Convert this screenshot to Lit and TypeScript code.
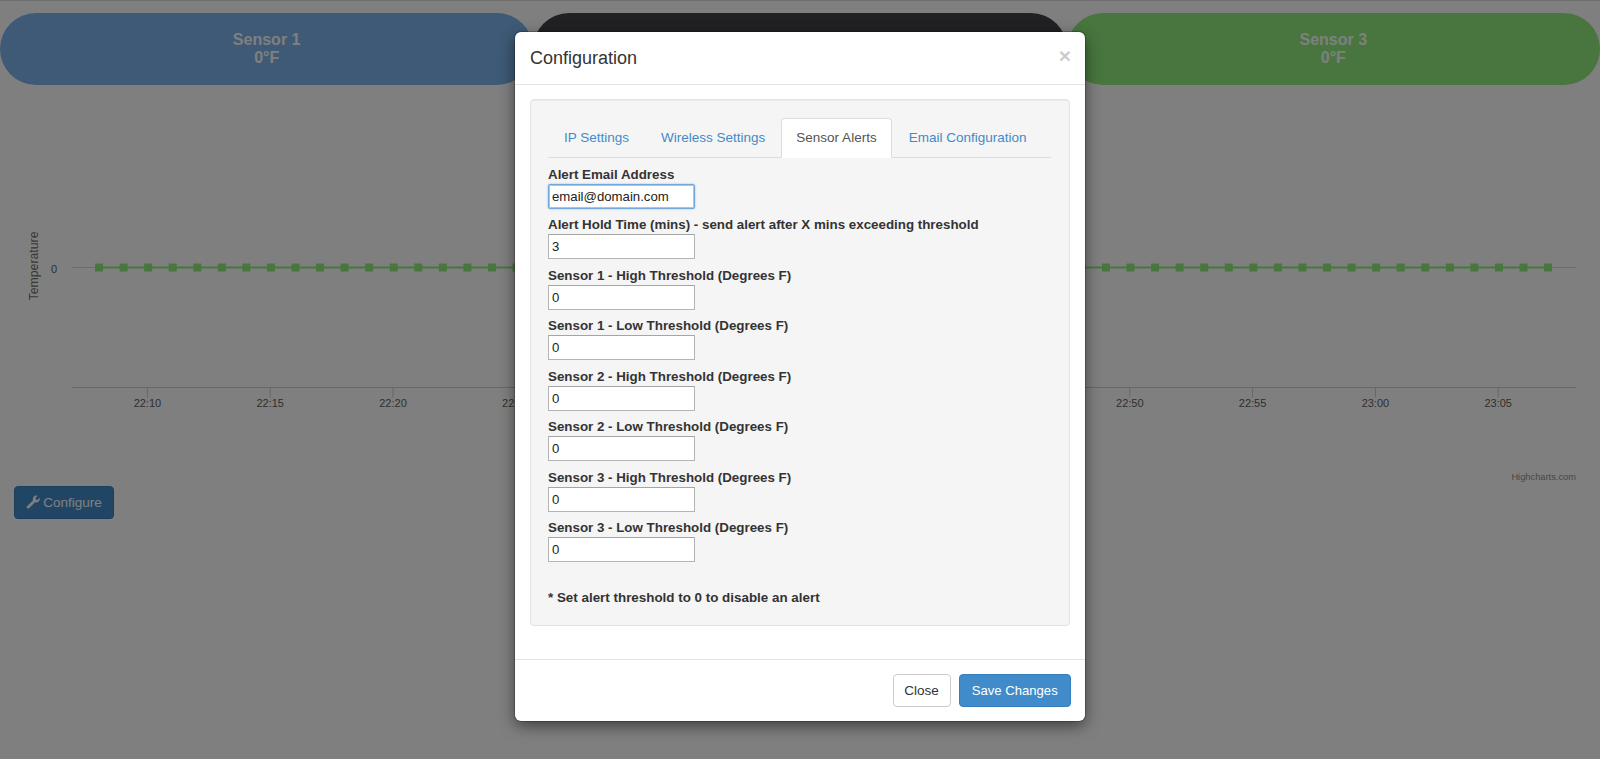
import { LitElement, html, css, svg } from "lit";
import { customElement } from "lit/decorators.js";

const FIELDS = [
  ["Alert Email Address", "email@domain.com", true],
  ["Alert Hold Time (mins) - send alert after X mins exceeding threshold", "3", false],
  ["Sensor 1 - High Threshold (Degrees F)", "0", false],
  ["Sensor 1 - Low Threshold (Degrees F)", "0", false],
  ["Sensor 2 - High Threshold (Degrees F)", "0", false],
  ["Sensor 2 - Low Threshold (Degrees F)", "0", false],
  ["Sensor 3 - High Threshold (Degrees F)", "0", false],
  ["Sensor 3 - Low Threshold (Degrees F)", "0", false],
] as const;

const TICKS = ["22:10","22:15","22:20","22:25","22:30","22:35","22:40","22:45","22:50","22:55","23:00","23:05"];

@customElement("app-root")
export class AppRoot extends LitElement {
  static styles = css`
    :host { display: block; height: 759px; position: relative; overflow: hidden; background: #fff;
      font-family: "Liberation Sans", Arial, sans-serif; font-size: 14px; color: #333; }
    .page { display: flex; flex-direction: column; padding-top: 13px; }
    .pills { display: grid; grid-template-columns: repeat(3, 1fr); }
    .pill { height: 72px; border-radius: 36px; color: #fff; font-weight: bold; font-size: 16px; line-height: 17.6px;
      display: flex; flex-direction: column; align-items: center; justify-content: center; box-sizing: border-box; }
    .s1 { background: #7cb5ec; } .s2 { background: #434348; } .s3 { background: #90ed7d; }
    .chart { display: block; width: 1600px; height: 400.5px; }
    .chart text { font-family: "Liberation Sans", Arial, sans-serif; }
    .cfg { align-self: flex-start; margin-left: 14px; height: 33px; width: 100px; box-sizing: border-box; border: 1px solid #357ebd;
      border-radius: 4px; background: #428bca; color: #fff; font: 13.5px "Liberation Sans", Arial, sans-serif;
      display: flex; align-items: center; justify-content: center; gap: 3px; padding: 0; }
    .backdrop { position: absolute; inset: 0; background: rgba(0,0,0,.5); border-top: 1px solid #6e6e6e; box-sizing: border-box; }
    .modal { position: absolute; left: 515px; top: 32px; width: 570px; height: 689px; box-sizing: border-box; background: #fff;
      border-radius: 6px; box-shadow: 0 0 0 1px rgba(0,0,0,.2), 0 5px 15px rgba(0,0,0,.5); display: flex; flex-direction: column; }
    .head { display: flex; justify-content: space-between; align-items: flex-start; padding: 13px 15px; height: 53px; box-sizing: border-box; border-bottom: 1px solid #e5e5e5; }
    .head h4 { margin: 0; font-size: 18px; font-weight: 400; line-height: 26px; color: #333; }
    .x { font-size: 21px; font-weight: bold; line-height: 20px; color: #000; opacity: .2; margin: 1px -1px 0 0; }
    .body { flex: 1; padding: 14px 15px 0; }
    .well { height: 527px; box-sizing: border-box; background: #f5f5f5; border: 1px solid #e3e3e3; border-radius: 4px; padding: 18px 18px 0 17px; box-shadow: inset 0 1px 1px rgba(0,0,0,.05); }
    .tabs { display: flex; gap: 2px; border-bottom: 1px solid #ddd; height: 40px; box-sizing: border-box; margin-bottom: 6.5px; }
    .tab { padding: 0 14px; height: 40px; box-sizing: border-box; line-height: 38px; border: 1px solid transparent; border-radius: 4px 4px 0 0; color: #428bca; font-size: 13.5px; white-space: nowrap; }
    .tab:nth-child(1) { padding-left: 15px; }
    .tab:nth-child(2) { padding-right: 13px; }
    .tab.on { background: #fff; color: #555; border-color: #ddd; border-bottom-color: #fff; }
    .field { display: flex; flex-direction: column; align-items: flex-start; height: 50.5px; }
    label { font-weight: bold; font-size: 13.35px; line-height: 20px; color: #333; height: 19px; }
    input { width: 147px; height: 25px; box-sizing: border-box; margin: 0; padding: 1px 3px; font: 13.2px "Liberation Sans", Arial, sans-serif; color: #222; background: #fff;
      border: 1px solid #b4b4b4; border-top-color: #a5a5a5; border-radius: 0; outline: none; }
    input.focus { border: 1px solid #74a7dc; box-shadow: inset 0 0 0 1px #a3c6ea, 0 0 2px #8db7e4; border-radius: 2px; }
    .note { margin: 19.5px 0 0; font-weight: bold; font-size: 13.4px; line-height: 20px; color: #333; }
    .foot { display: flex; justify-content: flex-end; gap: 8.5px; padding: 14px 14.5px 14px; border-top: 1px solid #e5e5e5; }
    button.b { height: 33px; box-sizing: border-box; border-radius: 4px; font: 13.5px "Liberation Sans", Arial, sans-serif; padding: 0; white-space: nowrap; }
    .close { width: 58px; background: #fff; border: 1px solid #ccc; color: #333; }
    button.save { width: 111.5px; background: #428bca; border: 1px solid #357ebd; color: #fff; font-size: 13.1px; }
  `;

  private chart() {
    const pts = Array.from({ length: 60 }, (_, i) => 99 + i * 24.56);
    const y0 = 85;
    const Y = 267.5 - y0;
    const AX = 387.5 - y0;
    return html`<svg class="chart" viewBox="0 0 1600 400.5" xmlns="http://www.w3.org/2000/svg">
      <line x1="72" x2="1576" y1=${Y} y2=${Y} stroke="#d8d8d8" stroke-width="1"></line>
      <line x1="72" x2="1576" y1=${AX} y2=${AX} stroke="#c0d0e0" stroke-width="1"></line>
      ${TICKS.map((t, i) => {
        const x = 147.4 + i * 122.8;
        return svg`<line x1=${x} x2=${x} y1=${AX} y2=${AX + 10} stroke="#c0d0e0"></line>
          <text x=${x} y=${AX + 19} text-anchor="middle" font-size="11" fill="#606060">${t}</text>`;
      })}
      <line x1="99" x2="1548" y1=${Y} y2=${Y} stroke="#90ed7d" stroke-width="2"></line>
      ${pts.map((x) => svg`<rect x=${x - 4} y=${Y - 4} width="8" height="8" fill="#90ed7d"></rect>`)}
      <text x="54" y=${Y + 5} text-anchor="middle" font-size="11" fill="#606060">0</text>
      <text transform="translate(38 ${266 - y0}) rotate(-90)" text-anchor="middle" font-size="12.3" fill="#707070">Temperature</text>
      <text x="1576" y=${476.7 - y0 + 3} text-anchor="end" font-size="9.3" fill="#909090">Highcharts.com</text>
    </svg>`;
  }

  render() {
    return html`
      <div class="page">
        <div class="pills">
          <div class="pill s1"><span>Sensor 1</span><span>0°F</span></div>
          <div class="pill s2"><span>Sensor 2</span><span>0°F</span></div>
          <div class="pill s3"><span>Sensor 3</span><span>0°F</span></div>
        </div>
        ${this.chart()}
        <button class="cfg">
          <svg width="14" height="14" viewBox="0 0 14 14"><path fill="#fff" d="M1 11.2 7 5.4C6.5 3.6 7 2.2 8.2 1.2 9.3.4 10.6.3 11.6.7L9.4 2.9 9.8 4.6 11.4 5 13.6 2.8C14 4 13.7 5.4 12.7 6.4 11.7 7.3 10.3 7.7 9 7.2L3 13.2C2.4 13.7 1.6 13.7 1 13.1.5 12.6.5 11.8 1 11.2Z"></path></svg>
          <span>Configure</span>
        </button>
      </div>
      <div class="backdrop"></div>
      <div class="modal">
        <div class="head"><h4>Configuration</h4><span class="x">×</span></div>
        <div class="body">
          <div class="well">
            <div class="tabs">
              <div class="tab">IP Settings</div>
              <div class="tab">Wireless Settings</div>
              <div class="tab on">Sensor Alerts</div>
              <div class="tab">Email Configuration</div>
            </div>
            ${FIELDS.map(([l, v, f]) => html`<div class="field"><label>${l}</label><input class=${f ? "focus" : ""} .value=${v} /></div>`)}
            <p class="note">* Set alert threshold to 0 to disable an alert</p>
          </div>
        </div>
        <div class="foot">
          <button class="b close">Close</button>
          <button class="b save">Save Changes</button>
        </div>
      </div>
    `;
  }
}
